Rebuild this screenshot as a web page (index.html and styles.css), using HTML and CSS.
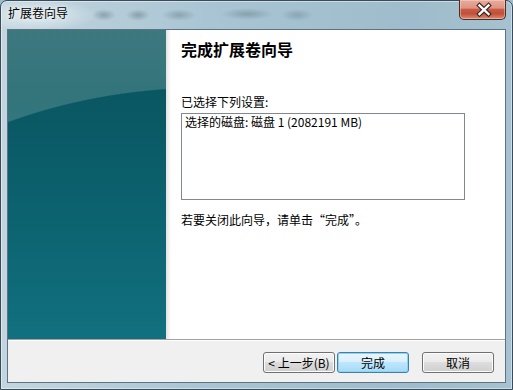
FILE: index.html
```html
<!DOCTYPE html>
<html lang="zh-CN">
<head>
  <meta charset="UTF-8" />
  <title>扩展卷向导</title>
  <link rel="stylesheet" href="styles.css">
</head>
<body>
  <div class="window">
    <div class="titlebar">
      <span class="title">扩展卷向导</span>
      <button class="close-btn">
        <svg width="47" height="19" viewBox="0 0 47 19">
          <path d="M19.5 5.5 L28.5 14 M28.5 5.5 L19.5 14" stroke="#3b2622" stroke-width="4.6" stroke-linecap="square" fill="none"/>
          <path d="M19.5 5.5 L28.5 14 M28.5 5.5 L19.5 14" stroke="#ffffff" stroke-width="2.4" stroke-linecap="square" fill="none"/>
        </svg>
      </button>
    </div>

    <div class="client">
      <div class="main">
        <div class="side-panel"></div>
        <div class="content">
          <h1 class="page-title">完成扩展卷向导</h1>
          <div class="label">已选择下列设置:</div>
          <div class="summary-box">选择的磁盘: 磁盘 1 (2082191 MB)</div>
          <p class="hint">若要关闭此向导，请单击“完成”。</p>
        </div>
      </div>
      <div class="footer">
        <button class="btn">&lt; 上一步(B)</button>
        <button class="btn btn-default">完成</button>
        <button class="btn btn-cancel">取消</button>
      </div>
    </div>
  </div>
</body>
</html>
```

FILE: styles.css
```css
* {
  box-sizing: border-box;
}
body {
  margin: 0;
  font-family: "Noto Sans CJK SC", "Noto Sans", sans-serif;
  font-size: 12px;
  color: #000;
  background: #9fbccb;
}
.window {
  width: 513px;
  height: 390px;
  display: flex;
  flex-direction: column;
  padding: 0 6px 6px;
  border: 1px solid #3a4c5a;
  border-radius: 7px 7px 0 0;
  box-shadow: inset 0 0 0 1px rgba(255,255,255,0.45);
  background:
    radial-gradient(ellipse 12px 6px at 103px 14px, rgba(60,80,92,0.35), transparent),
    radial-gradient(ellipse 12px 6px at 137px 14px, rgba(60,80,92,0.35), transparent),
    radial-gradient(ellipse 17px 6px at 178px 14px, rgba(60,80,92,0.3), transparent),
    radial-gradient(ellipse 26px 6px at 246px 13px, rgba(60,80,92,0.3), transparent),
    radial-gradient(ellipse 16px 6px at 296px 14px, rgba(60,80,92,0.25), transparent),
    radial-gradient(ellipse 60px 16px at 36px 14px, rgba(255,255,255,0.6), transparent),
    linear-gradient(to right, #c3d6df, #a9c5d3 40%, #9ebccb 80%, #a6c2d0);
}
.titlebar {
  height: 28px;
  display: flex;
  justify-content: space-between;
  align-items: flex-start;
}
.title {
  margin: 5px 0 0 1px;
  line-height: 14px;
  font-size: 12px;
  text-shadow: 0 0 4px rgba(255,255,255,0.9);
}
.close-btn {
  width: 47px;
  height: 20px;
  margin-top: -1px;
  padding: 0;
  border: 1px solid #4b2c26;
  border-top: none;
  border-radius: 0 0 5px 5px;
  box-shadow: inset 0 0 0 1px rgba(255,220,210,0.45);
  background: linear-gradient(#e8ab9c, #de9483 42%, #c85b45 50%, #c24f39 72%, #d98c74);
}
.close-btn svg {
  display: block;
}
.client {
  flex: 1;
  display: flex;
  flex-direction: column;
  border: 1px solid #5b7384;
  background: #f0f0f0;
}
.main {
  height: 310px;
  display: flex;
  background: #fff;
  border-bottom: 1px solid #a0a0a0;
}
.side-panel {
  width: 158px;
  background:
    radial-gradient(ellipse 430px 300px at 200px 357px, transparent 99.6%, rgba(150,185,180,0.3) 100%),
    linear-gradient(rgba(255,255,255,0.06), transparent 60px),
    linear-gradient(#08525e, #0a5c68 40%, #11707f);
}
.content {
  flex: 1;
  padding: 11px 0 0 15px;
  background: linear-gradient(to right, #e2e2e2, #fff 5px);
}
.page-title {
  margin: 0;
  font-size: 16px;
  line-height: 16px;
  font-weight: bold;
}
.label {
  margin-top: 39px;
  line-height: 12px;
}
.summary-box {
  margin-top: 5px;
  width: 284px;
  height: 87px;
  padding: 2px 3px;
  border: 1px solid #828790;
  line-height: 12px;
  background: #fff;
}
.hint {
  margin: 14px 0 0;
  line-height: 12px;
}
.footer {
  flex: 1;
  display: flex;
  justify-content: flex-end;
  align-items: flex-start;
  padding: 11px 11px 0 0;
  border-top: 1px solid #fff;
}
.btn {
  width: 72px;
  height: 21px;
  padding: 0;
  border: 1px solid #707070;
  border-radius: 3px;
  font-family: "Noto Sans CJK SC", "Noto Sans", sans-serif;
  font-size: 12px;
  line-height: 17px;
  color: #000;
  box-shadow: inset 0 0 0 1px #fcfcfc;
  background: linear-gradient(#f2f2f2, #ebebeb 45%, #dddddd 50%, #cfcfcf);
}
.btn-default {
  margin-left: 2px;
  border-color: #3c7fb1;
  box-shadow: inset 0 0 0 1px #8fd3f3;
  background: linear-gradient(#eaf6fd, #d9f0fc 45%, #bee6fd 50%, #a7d9f5);
}
.btn-cancel {
  margin-left: 13px;
}
```
